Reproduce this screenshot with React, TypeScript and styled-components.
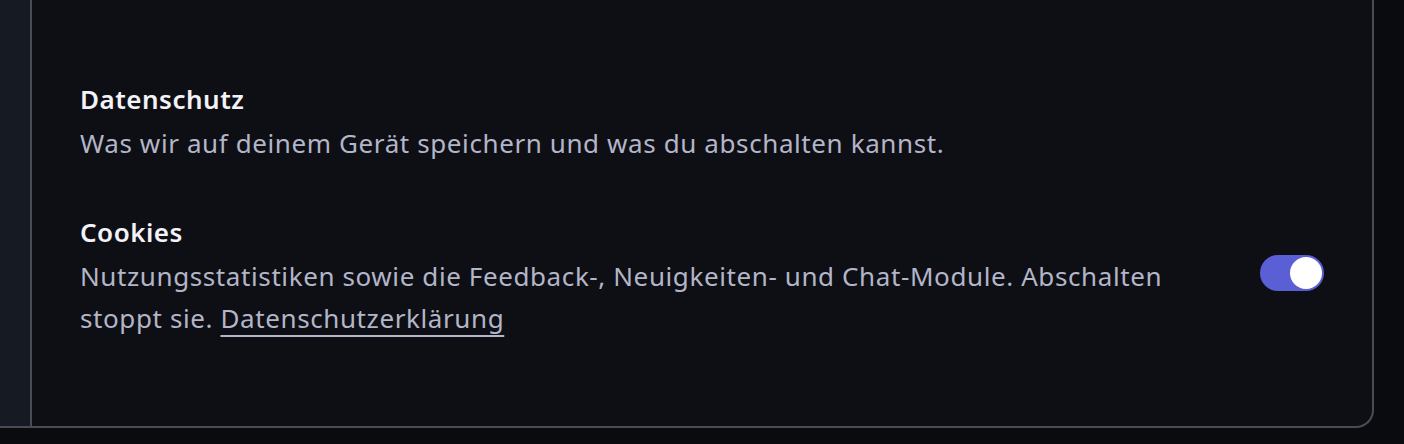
import styled, { createGlobalStyle } from "styled-components";

const GlobalStyle = createGlobalStyle`
    html, body {
        margin: 0;
        padding: 0;
        background: #0a0b0e;
    }
    body {
        font-family: "Noto Sans", Roboto, sans-serif;
        -webkit-font-smoothing: antialiased;
    }
`;

const Frame = styled.div`
    display: flex;
    width: 1374px;
    height: 428px;
    box-sizing: border-box;
    border-right: 2px solid #4b4b58;
    border-bottom: 2px solid #4b4b58;
    border-bottom-right-radius: 18px;
    overflow: hidden;
    background: #0e0f14;
`;

const Sidebar = styled.aside`
    width: 30px;
    flex-shrink: 0;
    background: #161a23;
    border-right: 2px solid #4b4b58;
`;

const Content = styled.section`
    flex: 1;
    padding: 81px 48px 0;
    display: flex;
    flex-direction: column;
    gap: 50px;
`;

const Group = styled.div`
    display: flex;
    flex-direction: column;
`;

const Row = styled.div`
    display: flex;
    align-items: center;
    gap: 32px;
`;

const TextBlock = styled.div`
    flex: 1;
    display: flex;
    flex-direction: column;
`;

const Title = styled.h3`
    margin: 0;
    font-size: 26px;
    line-height: 36px;
    font-weight: 600;
    letter-spacing: 0.5px;
    color: #f2f2f7;
`;

const Description = styled.p`
    margin: 5px 0 0;
    font-size: 26px;
    line-height: 42px;
    font-weight: 400;
    letter-spacing: 0.6px;
    color: #b3b5c9;
`;

const Link = styled.a`
    color: inherit;
    text-decoration: underline;
    text-underline-offset: 7px;
    text-decoration-thickness: 2px;
`;

const Toggle = styled.button<{ $on: boolean }>`
    position: relative;
    width: 64px;
    height: 36px;
    flex-shrink: 0;
    border: none;
    border-radius: 18px;
    padding: 0;
    margin-top: -8px;
    background: ${(p) => (p.$on ? "#5b5fd6" : "#3a3b48")};
    cursor: pointer;

    &::after {
        content: "";
        position: absolute;
        top: 2px;
        left: ${(p) => (p.$on ? "30px" : "2px")};
        width: 32px;
        height: 32px;
        border-radius: 50%;
        background: #ffffff;
    }
`;

export default function App() {
    return (
        <>
            <GlobalStyle />
            <Frame>
                <Sidebar />
                <Content>
                    <Group>
                        <Title>Datenschutz</Title>
                        <Description>Was wir auf deinem Gerät speichern und was du abschalten kannst.</Description>
                    </Group>
                    <Row>
                        <TextBlock>
                            <Title>Cookies</Title>
                            <Description>
                                Nutzungsstatistiken sowie die Feedback-, Neuigkeiten- und Chat-Module. Abschalten
                                stoppt sie. <Link href="#">Datenschutzerklärung</Link>
                            </Description>
                        </TextBlock>
                        <Toggle $on={true} aria-label="Cookies" />
                    </Row>
                </Content>
            </Frame>
        </>
    );
}
